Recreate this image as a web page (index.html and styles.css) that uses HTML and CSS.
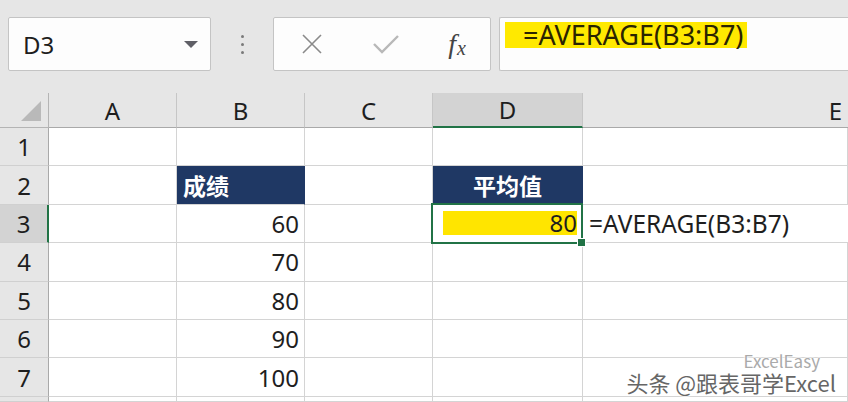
FILE: index.html
```html
<!DOCTYPE html>
<html lang="zh-CN">
<head>
    <meta charset="UTF-8">
    <title>AVERAGE</title>
    <link rel="stylesheet" href="styles.css">
</head>
<body>
<div class="toolbar">
    <div class="name-box">
        <span>D3</span>
        <i class="arrow"></i>
    </div>
    <div class="dots"><i></i><i></i><i></i></div>
    <div class="buttons">
        <svg class="btn" width="22" height="22" viewBox="0 0 22 22"><path d="M2 2 L20 20 M20 2 L2 20" stroke="#8a8a8a" stroke-width="1.6" fill="none"/></svg>
        <svg class="btn" width="26" height="22" viewBox="0 0 26 22"><path d="M1 11 L9 19 L25 3" stroke="#b8b8b8" stroke-width="2.4" fill="none"/></svg>
        <span class="fx">f<sub>x</sub></span>
    </div>
    <div class="formula">
        <span class="mark">=AVERAGE(B3:B7)</span>
    </div>
</div>

<div class="sheet">
    <div class="corner"><i></i></div>
    <div class="col-head">A</div>
    <div class="col-head">B</div>
    <div class="col-head">C</div>
    <div class="col-head active">D</div>
    <div class="col-head e">E</div>

    <div class="row-head">1</div>
    <div class="cell"></div><div class="cell"></div><div class="cell"></div><div class="cell"></div><div class="cell"></div>

    <div class="row-head">2</div>
    <div class="cell"></div>
    <div class="cell title">成绩</div>
    <div class="cell"></div>
    <div class="cell title center">平均值</div>
    <div class="cell"></div>

    <div class="row-head active">3</div>
    <div class="cell"></div>
    <div class="cell num">60</div>
    <div class="cell"></div>
    <div class="cell selected"><span class="mark">80</span><i class="handle"></i></div>
    <div class="cell spill">=AVERAGE(B3:B7)</div>

    <div class="row-head">4</div>
    <div class="cell"></div><div class="cell num">70</div><div class="cell"></div><div class="cell"></div><div class="cell"></div>

    <div class="row-head">5</div>
    <div class="cell"></div><div class="cell num">80</div><div class="cell"></div><div class="cell"></div><div class="cell"></div>

    <div class="row-head">6</div>
    <div class="cell"></div><div class="cell num">90</div><div class="cell"></div><div class="cell"></div><div class="cell"></div>

    <div class="row-head">7</div>
    <div class="cell"></div><div class="cell num">100</div><div class="cell"></div><div class="cell"></div><div class="cell"></div>

    <div class="row-head"></div>
    <div class="cell"></div><div class="cell"></div><div class="cell"></div><div class="cell"></div><div class="cell"></div>
</div>

<div class="watermark">
    <span class="small">ExcelEasy</span>
    <span>头条 @跟表哥学Excel</span>
</div>
</body>
</html>
```

FILE: styles.css
```css
html,body{
    margin: 0;
    padding: 0;
    width: 848px;
    height: 402px;
    overflow: hidden;
    background: #e6e6e6;
    font-family: "Noto Sans", "Open Sans", "Noto Sans CJK SC", sans-serif;
    color: #1e1e1e;
    position: relative;
}
.toolbar{
    display: flex;
    align-items: center;
    height: 93px;
    padding: 17px 0 22px 8px;
    box-sizing: border-box;
}
.name-box,.buttons,.formula{
    height: 54px;
    box-sizing: border-box;
    background: #fdfdfd;
    border: 1px solid #c4c4c4;
    border-radius: 2px;
    display: flex;
    align-items: center;
}
.name-box{
    width: 203px;
    padding: 0 12px 0 14px;
    justify-content: space-between;
    font-size: 24px;
}
.arrow{
    width: 0;height: 0;
    border-left: 7px solid transparent;
    border-right: 7px solid transparent;
    border-top: 7px solid #5f5f66;
}
.dots{
    width: 62px;
    display: flex;
    flex-direction: column;
    align-items: center;
    gap: 5px;
}
.dots i{
    width: 3px;height: 3px;
    border-radius: 50%;
    background: #7a7a7a;
}
.buttons{
    width: 218px;
    padding: 0 24px 0 27px;
    justify-content: space-between;
}
.fx{
    font-family: "Liberation Serif", serif;
    font-style: italic;
    font-size: 28px;
    color: #444;
}
.fx sub{
    font-size: 20px;
    vertical-align: -2px;
    margin-left: 1px;
}
.formula{
    margin-left: 8px;
    flex: 1;
    border-right: none;
    border-radius: 2px 0 0 2px;
    padding-left: 5px;
    align-items: flex-start;
    padding-top: 4px;
}
.formula .mark{
    background: #ffe900;
    padding: 0 4px 0 18px;
    font-size: 27px;
    line-height: 26px;
    color: #2a2400;
}
.sheet{
    display: grid;
    grid-template-columns: 49px 128px 128px 128px 150px 1fr;
    grid-template-rows: 35px repeat(7, 38.4px) 5px;
    font-size: 24px;
}
.corner,.col-head,.row-head{
    background: #e6e6e6;
    box-sizing: border-box;
    display: flex;
    align-items: center;
    justify-content: center;
}
.corner{
    border-right: 1px solid #b4b4b4;
    border-bottom: 1px solid #b4b4b4;
    align-items: flex-end;
    justify-content: flex-end;
    padding: 0 7px 6px 0;
}
.corner i{
    width: 0;height: 0;
    border-left: 20px solid transparent;
    border-bottom: 20px solid #b9b9b9;
}
.col-head{
    border-right: 1px solid #c6c6c6;
    border-bottom: 1px solid #a9a9a9;
}
.col-head.e{
    justify-content: flex-end;
    padding-right: 6px;
    border-right: none;
}
.col-head.active{
    background: #d3d3d3;
    border-bottom: 2px solid #217346;
}
.row-head{
    border-right: 1px solid #a9a9a9;
    border-bottom: 1px solid #d0d0d0;
}
.row-head.active{
    background: #d3d3d3;
    border-right: 2px solid #217346;
}
.cell{
    background: #fff;
    box-sizing: border-box;
    border-right: 1px solid #d4d4d4;
    border-bottom: 1px solid #d4d4d4;
    display: flex;
    align-items: center;
    padding: 0 6px;
    white-space: nowrap;
}
.cell.title{
    background: #1f3864;
    color: #fff;
    font-weight: bold;
    font-family: "Noto Sans CJK SC", sans-serif;
    font-size: 23px;
    border-right-color: #1f3864;
}
.cell.center{
    justify-content: center;
}
.cell.num{
    justify-content: flex-end;
    padding-right: 5px;
}
.cell.selected{
    position: relative;
    justify-content: flex-end;
    padding-right: 5px;
}
.cell.selected::after{
    content: '';
    position: absolute;
    left: -2px;top: -2px;right: -1px;bottom: -2px;
    border: 2px solid #217346;
}
.cell.selected .mark{
    background: #ffe500;
    width: 134px;
    text-align: right;
    line-height: 24px;
    margin-top: -1px;
}
.handle{
    position: absolute;
    right: -4px;bottom: -5px;
    width: 7px;height: 7px;
    background: #217346;
    border: 1px solid #fff;
    z-index: 2;
}
.cell.spill{
    padding-left: 6px;
    border-right: none;
    font-size: 24.5px;
}
.watermark{
    position: absolute;
    right: 12px;
    bottom: 8px;
    display: flex;
    flex-direction: column;
    align-items: flex-end;
    font-family: "Noto Sans CJK SC", sans-serif;
    color: #666;
    font-size: 22px;
    line-height: 24px;
    text-shadow: 0 0 2px #fff, 0 0 2px #fff, 0 0 3px #fff;
}
.watermark .small{
    font-size: 17px;
    line-height: 18px;
    margin-right: 16px;
    color: #aaa;
}
```
